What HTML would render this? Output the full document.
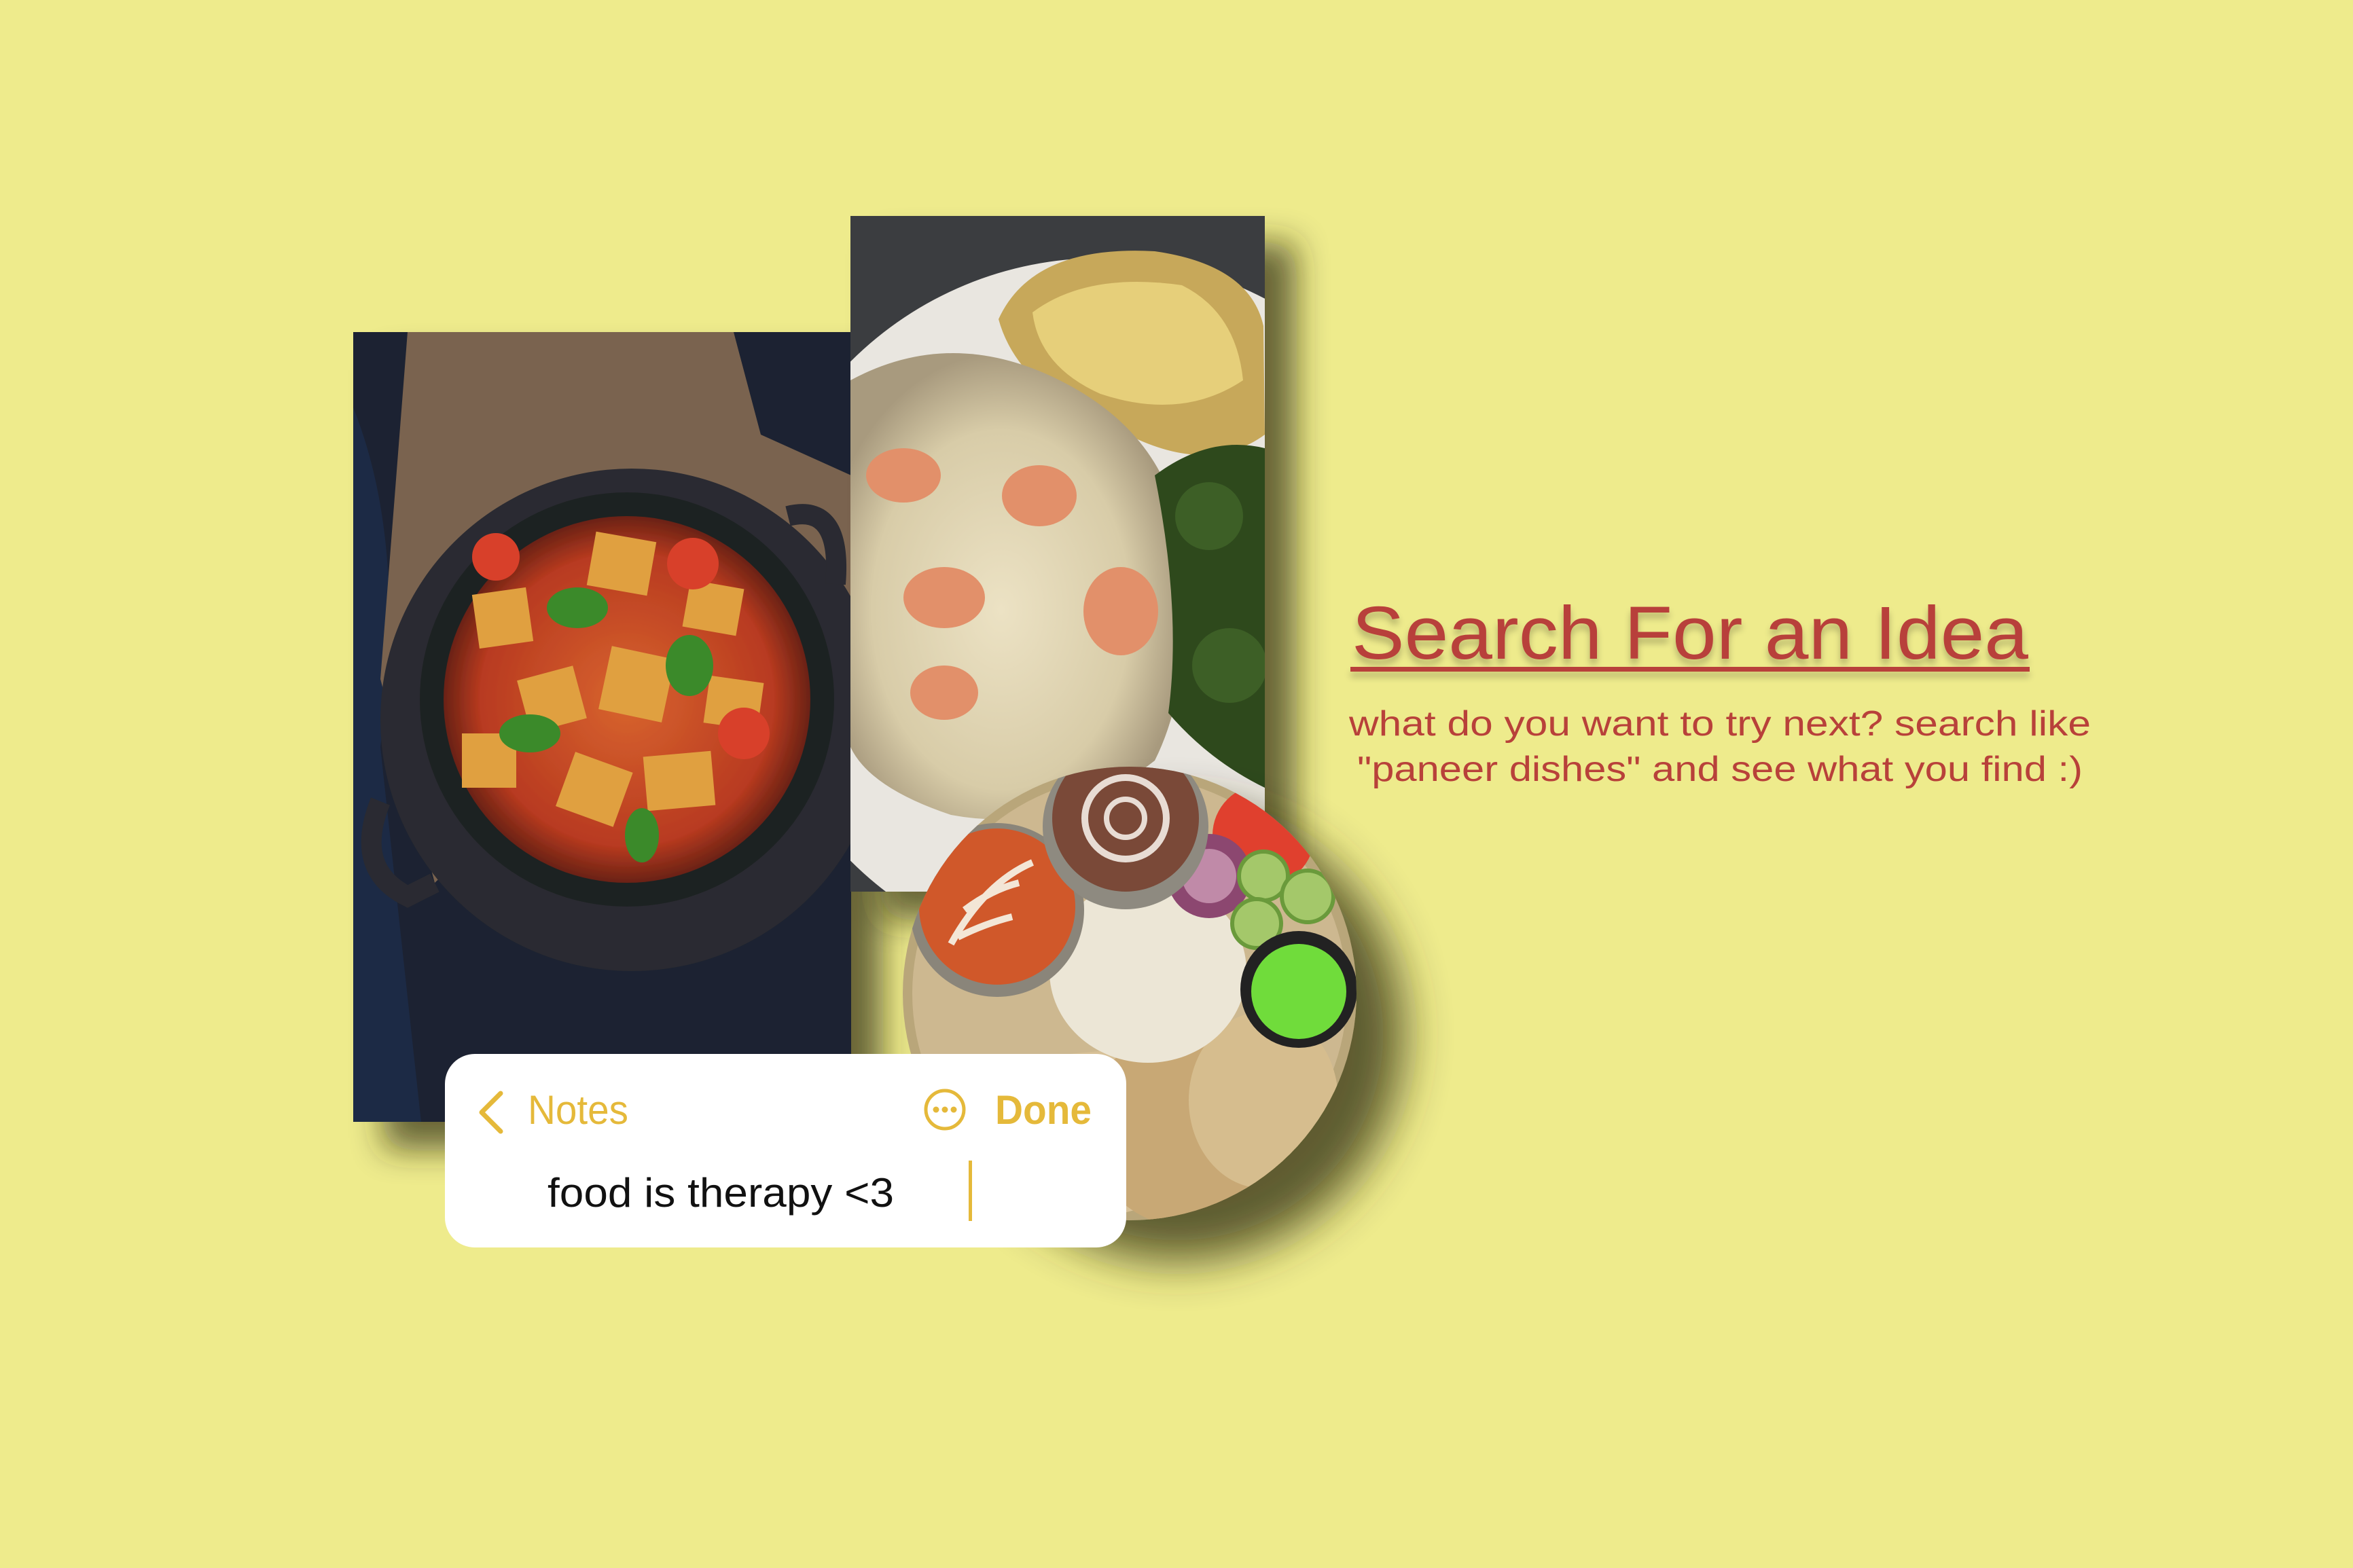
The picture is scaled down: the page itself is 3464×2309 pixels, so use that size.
<!DOCTYPE html>
<html><head><meta charset="utf-8"><style>
html,body{margin:0;padding:0;background:#eeeb8c;}
svg{display:block}
</style></head><body>
<svg width="3464" height="2309" viewBox="0 0 3464 2309" xmlns="http://www.w3.org/2000/svg">
<defs>
<filter id="sh" x="-30%" y="-30%" width="160%" height="160%"><feGaussianBlur in="SourceAlpha" stdDeviation="24"/><feOffset dx="45" dy="40"/><feComponentTransfer result="a"><feFuncA type="linear" slope="0.7"/></feComponentTransfer><feFlood flood-color="#2e2c12"/><feComposite in2="a" operator="in"/><feMerge><feMergeNode/><feMergeNode in="SourceGraphic"/></feMerge></filter>
<filter id="sh2" x="-30%" y="-30%" width="160%" height="160%"><feGaussianBlur in="SourceAlpha" stdDeviation="34"/><feOffset dx="70" dy="60"/><feComponentTransfer result="a"><feFuncA type="linear" slope="0.8"/></feComponentTransfer><feFlood flood-color="#3a3818"/><feComposite in2="a" operator="in"/><feMerge><feMergeNode/><feMergeNode in="SourceGraphic"/></feMerge></filter>
<filter id="ts"><feGaussianBlur in="SourceAlpha" stdDeviation="5"/><feOffset dx="0" dy="8"/><feComponentTransfer><feFuncA type="linear" slope="0.25"/></feComponentTransfer><feMerge><feMergeNode/><feMergeNode in="SourceGraphic"/></feMerge></filter>
<radialGradient id="curry" cx="50%" cy="50%" r="50%"><stop offset="0" stop-color="#d8642e"/><stop offset="0.8" stop-color="#b83a20"/><stop offset="1" stop-color="#6a2214"/></radialGradient>
<radialGradient id="pasta" cx="45%" cy="55%" r="55%"><stop offset="0" stop-color="#ece2c4"/><stop offset="0.7" stop-color="#d8cca8"/><stop offset="1" stop-color="#a89a7e"/></radialGradient>
<clipPath id="cl"><rect x="520" y="489" width="733" height="1163"/></clipPath>
<clipPath id="cm"><rect x="1252" y="318" width="610" height="995"/></clipPath>
<clipPath id="cc"><circle cx="1663" cy="1463" r="334"/></clipPath>
</defs>

<g filter="url(#sh)">
<rect x="520" y="489" width="733" height="1163" fill="#1d2330"/>
<g clip-path="url(#cl)">
 <path d="M520 600 Q600 800 560 1100 L620 1652 L520 1652Z" fill="#1a2a44"/>
 <path d="M600 489 L1080 489 L1120 640 L1253 700 L1253 1000 L900 1050 L640 1300 L560 1000 Z" fill="#7a6450"/>
 <circle cx="930" cy="1060" r="370" fill="#2a2c30"/>
 <circle cx="923" cy="1030" r="305" fill="#1f2124"/>
 <circle cx="923" cy="1030" r="270" fill="url(#curry)"/>
 <g fill="#e0a040">
  <rect x="870" y="790" width="90" height="80" transform="rotate(10 915 830)"/>
  <rect x="700" y="870" width="80" height="80" transform="rotate(-8 740 910)"/>
  <rect x="890" y="960" width="95" height="95" transform="rotate(12 937 1007)"/>
  <rect x="770" y="990" width="85" height="80" transform="rotate(-15 812 1030)"/>
  <rect x="1040" y="1000" width="80" height="70" transform="rotate(8 1080 1035)"/>
  <rect x="950" y="1110" width="100" height="80" transform="rotate(-5 1000 1150)"/>
  <rect x="830" y="1120" width="90" height="85" transform="rotate(20 875 1162)"/>
  <rect x="680" y="1080" width="80" height="80"/>
  <rect x="1010" y="860" width="80" height="70" transform="rotate(10 1050 895)"/>
 </g>
 <g fill="#3a8a2a">
  <ellipse cx="850" cy="895" rx="45" ry="30"/><ellipse cx="1015" cy="980" rx="35" ry="45"/>
  <ellipse cx="780" cy="1080" rx="45" ry="28"/><ellipse cx="945" cy="1230" rx="25" ry="40"/>
 </g>
 <g fill="#d8402a"><circle cx="1020" cy="830" r="38"/><circle cx="1095" cy="1080" r="38"/><circle cx="730" cy="820" r="35"/></g>
 <path d="M560 1180 Q520 1280 600 1320 L640 1300" stroke="#2a2c30" stroke-width="30" fill="none"/>
 <path d="M1160 760 Q1240 740 1230 860" stroke="#2a2c30" stroke-width="30" fill="none"/>
</g>
</g>

<g filter="url(#sh)">
<rect x="1252" y="318" width="610" height="995" fill="#3b3d40"/>
<g clip-path="url(#cm)">
 <ellipse cx="1620" cy="900" rx="520" ry="520" fill="#e9e6e0"/>
 <path d="M1470 470 Q1520 360 1700 370 Q1840 390 1860 480 L1862 640 Q1780 700 1660 640 Q1500 580 1470 470Z" fill="#c7a85a"/>
 <path d="M1520 460 Q1600 400 1740 420 Q1820 460 1830 560 Q1740 620 1620 580 Q1530 540 1520 460Z" fill="#e6cf7a"/>
 <path d="M1252 560 Q1400 480 1560 560 Q1720 640 1740 800 Q1760 1000 1700 1120 Q1560 1230 1400 1200 Q1280 1160 1252 1100Z" fill="url(#pasta)"/>
 <g fill="#e2906a"><ellipse cx="1330" cy="700" rx="55" ry="40"/><ellipse cx="1530" cy="730" rx="55" ry="45"/><ellipse cx="1390" cy="880" rx="60" ry="45"/><ellipse cx="1650" cy="900" rx="55" ry="65"/><ellipse cx="1390" cy="1020" rx="50" ry="40"/></g>
 <path d="M1700 700 Q1780 640 1862 660 L1862 1160 Q1780 1120 1720 1050 Q1740 900 1700 700Z" fill="#2f4a1e"/>
 <circle cx="1780" cy="760" r="50" fill="#3d5f26"/><circle cx="1810" cy="980" r="55" fill="#3d5f26"/>
</g>
</g>

<g filter="url(#sh2)">
<circle cx="1663" cy="1463" r="334" fill="#b9a67a"/>
<g clip-path="url(#cc)">
 <circle cx="1663" cy="1463" r="320" fill="#cdb890"/>
 <path d="M1380 1600 Q1600 1520 1800 1560 Q1960 1600 1990 1700 L1600 1800 L1330 1700Z" fill="#d7c096"/>
 <ellipse cx="1760" cy="1660" rx="160" ry="150" fill="#c8a874"/>
 <ellipse cx="1860" cy="1620" rx="110" ry="130" fill="#d6bd8e"/>
 <ellipse cx="1690" cy="1430" rx="145" ry="135" fill="#ece6d6"/>
 <circle cx="1860" cy="1230" r="75" fill="#e0402e"/>
 <circle cx="1780" cy="1290" r="62" fill="#8c4670"/><circle cx="1780" cy="1290" r="40" fill="#c08aa8"/>
 <g fill="#a4c86a" stroke="#6a9a3a" stroke-width="6"><circle cx="1860" cy="1290" r="36"/><circle cx="1925" cy="1320" r="38"/><circle cx="1850" cy="1360" r="36"/></g>
 <circle cx="1912" cy="1457" r="86" fill="#222"/><circle cx="1912" cy="1460" r="70" fill="#6fdc3a"/>
 <circle cx="1468" cy="1340" r="128" fill="#8a857a"/><circle cx="1468" cy="1335" r="115" fill="#d0582c"/>
 <path d="M1400 1390 Q1450 1300 1520 1270 M1420 1340 Q1460 1310 1500 1300 M1410 1380 Q1450 1360 1490 1350" stroke="#f3e6d6" stroke-width="10" fill="none"/>
 <circle cx="1657" cy="1217" r="122" fill="#8e8a80"/><circle cx="1657" cy="1205" r="108" fill="#7a4a38"/>
 <circle cx="1657" cy="1205" r="60" fill="none" stroke="#e8dcd4" stroke-width="10"/><circle cx="1657" cy="1205" r="28" fill="none" stroke="#e8dcd4" stroke-width="8"/>
</g>
</g>

<rect x="655" y="1552" width="1003" height="285" rx="44" fill="#ffffff"/>
<path d="M737 1610 L709 1638 L737 1666" stroke="#e5b93a" stroke-width="7" fill="none" stroke-linecap="round" stroke-linejoin="round"/>
<text x="777" y="1655" font-family="Liberation Sans, sans-serif" font-size="60" fill="#e5b93a" textLength="148" lengthAdjust="spacingAndGlyphs">Notes</text>
<circle cx="1391" cy="1634" r="28" fill="none" stroke="#e5b93a" stroke-width="5"/>
<circle cx="1378" cy="1634" r="4.5" fill="#e5b93a"/><circle cx="1391" cy="1634" r="4.5" fill="#e5b93a"/><circle cx="1404" cy="1634" r="4.5" fill="#e5b93a"/>
<text x="1465" y="1655" font-family="Liberation Sans, sans-serif" font-weight="bold" font-size="60" fill="#e5b93a" textLength="142" lengthAdjust="spacingAndGlyphs">Done</text>
<text x="806" y="1777" font-family="Liberation Sans, sans-serif" font-size="60" fill="#111" textLength="510" lengthAdjust="spacingAndGlyphs">food is therapy &lt;3</text>
<rect x="1426" y="1709" width="5" height="89" fill="#e5b93a"/>

<g filter="url(#ts)">
<text x="1990" y="970" font-family="Liberation Sans, sans-serif" font-size="110" fill="#b8413a" textLength="996" lengthAdjust="spacingAndGlyphs">Search For an Idea</text>
<rect x="1988" y="982" width="1000" height="7" fill="#b8413a"/>
</g>
<text x="1986" y="1083" font-family="Liberation Sans, sans-serif" font-size="52" fill="#b8413a" textLength="1092" lengthAdjust="spacingAndGlyphs">what do you want to try next? search like</text>
<text x="1998" y="1150" font-family="Liberation Sans, sans-serif" font-size="52" fill="#b8413a" textLength="1068" lengthAdjust="spacingAndGlyphs">"paneer dishes" and see what you find :)</text>
</svg>
</body></html>
